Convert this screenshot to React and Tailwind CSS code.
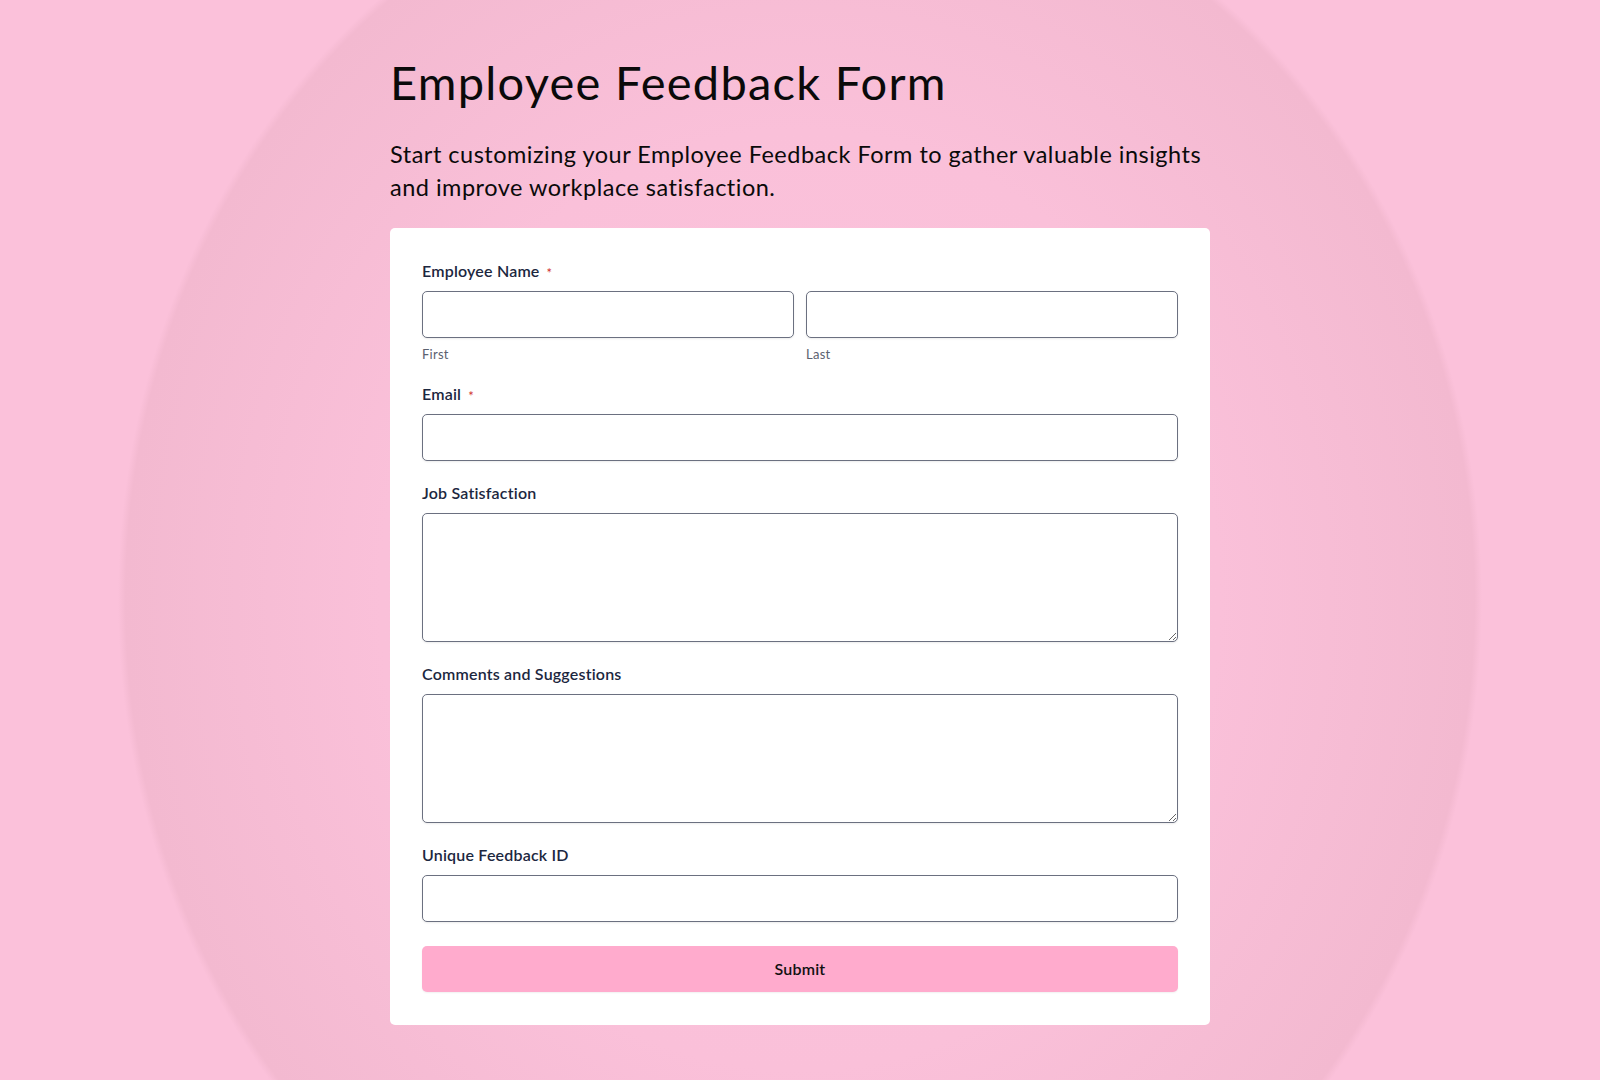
import React from "react";

function Label({ children, required }) {
  return (
    <div className="text-[16px] leading-[24px] font-semibold tracking-[0.012em] text-[#1c2740] mb-[8px]">
      {children}
      {required && (
        <span className="inline-block align-middle leading-[16px] text-[#d0312d] ml-[7px] text-[13px] font-normal">*</span>
      )}
    </div>
  );
}

const inputCls =
  "block w-full h-[47px] rounded-[5px] border border-[#6b7080] bg-white shadow-[0_1px_2px_rgba(0,0,0,0.08)] outline-none px-3 text-[16px]";

const areaCls =
  "block w-full h-[129px] rounded-[5px] border border-[#6b7080] bg-white shadow-[0_1px_2px_rgba(0,0,0,0.08)] outline-none px-3 py-2 text-[16px] resize-y";

export default function App() {
  return (
    <div
      className="min-h-screen w-full bg-[#fbc1da] bg-[radial-gradient(ellipse_762px_854px_at_800px_600px,#fcc4dd_0%,#fac0d9_55%,#f3b9d0_88.5%,#fbc1da_89.5%)] pb-[56px]"
      style={{ fontFamily: "Lato, 'Noto Sans', sans-serif" }}
    >
      <div className="w-[820px] mx-auto pt-[55px]">
        <h1 className="text-[47px] leading-[55px] tracking-[1.25px] text-[#0a0a0a] font-normal">Employee Feedback Form</h1>
        <p className="mt-[28px] text-[23.5px] leading-[33px] tracking-[0.5px] text-[#0a0a0a]">
          Start customizing your Employee Feedback Form to gather valuable insights and improve workplace satisfaction.
        </p>
        <form className="mt-[24px] bg-white rounded-[5px] px-[32px] pt-[31px] pb-[33px] flex flex-col gap-[20px]">
          <div>
            <Label required>Employee Name</Label>
            <div className="grid grid-cols-2 gap-[12px]">
              <div>
                <input className={inputCls} />
                <div className="mt-[8px] text-[13px] leading-[16px] tracking-[0.02em] text-[#5b6170]">First</div>
              </div>
              <div>
                <input className={inputCls} />
                <div className="mt-[8px] text-[13px] leading-[16px] tracking-[0.02em] text-[#5b6170]">Last</div>
              </div>
            </div>
          </div>
          <div>
            <Label required>Email</Label>
            <input className={inputCls} />
          </div>
          <div>
            <Label>Job Satisfaction</Label>
            <textarea className={areaCls} />
          </div>
          <div>
            <Label>Comments and Suggestions</Label>
            <textarea className={areaCls} />
          </div>
          <div>
            <Label>Unique Feedback ID</Label>
            <input className={inputCls} />
          </div>
          <button
            type="button"
            className="mt-[4px] h-[46px] w-full rounded-[5px] bg-[#ffabcd] text-[16px] font-semibold tracking-[0.012em] text-[#111] shadow-[0_1px_2px_rgba(0,0,0,0.06)]"
          >
            Submit
          </button>
        </form>
      </div>
    </div>
  );
}
